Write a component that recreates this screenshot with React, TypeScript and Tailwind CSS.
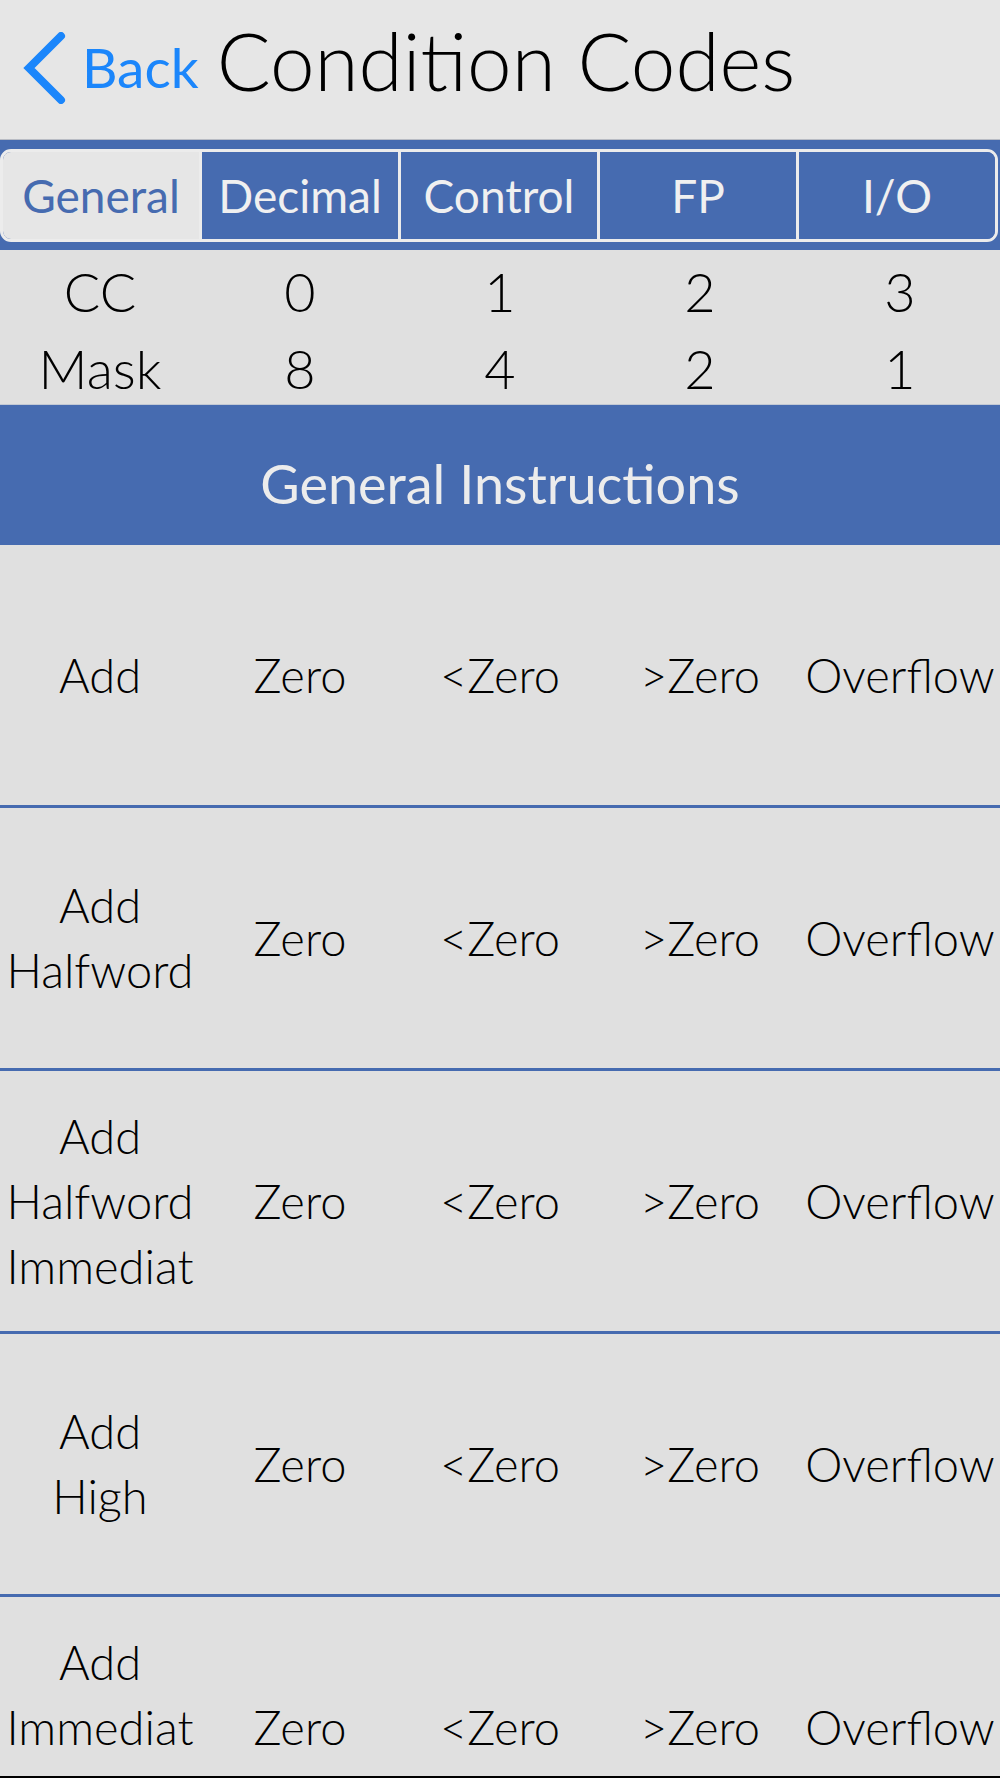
import React, { useState } from "react"

const tabs = ["General", "Decimal", "Control", "FP", "I/O"]

const rows: string[][] = [
  ["Add"],
  ["Add", "Halfword"],
  ["Add", "Halfword", "Immediat"],
  ["Add", "High"],
  ["Add", "Immediat", "\u00a0"],
]

const outcomes = ["Zero", "<Zero", ">Zero", "Overflow"]

function BackChevron() {
  return (
    <svg width="46" height="72" viewBox="0 0 46 72" className="shrink-0">
      <path d="M39 4 L7 36 L39 68" fill="none" stroke="#1b86fb" strokeWidth="8" strokeLinecap="round" strokeLinejoin="miter" />
    </svg>
  )
}

export default function App() {
  const [active, setActive] = useState(0)

  return (
    <div
      className="w-[1000px] h-[1778px] overflow-hidden bg-[#e0e0e0] border-b-2 border-black"
      style={{ fontFamily: "Lato, 'Open Sans', sans-serif" }}
    >
      {/* nav bar */}
      <div className="h-[140px] bg-[#e6e6e6] border-b border-[#b9bcc4] flex items-center pl-[22px] pb-[4px]">
        <button className="flex items-center gap-[14px] text-[#1b86fb]">
          <BackChevron />
          <span className="text-[55px] leading-none">Back</span>
        </button>
        <h1 className="ml-[18px] mb-[16px] text-[80px] leading-none font-light text-black">
          Condition Codes
        </h1>
      </div>

      {/* segmented control */}
      <div className="bg-[#466bb0] h-[110px] pt-[9px] pr-[2px]">
        <div className="flex h-[93px] rounded-[11px] border-[3px] border-[#ececec] overflow-hidden">
          {tabs.map((t, i) => (
            <button
              key={t}
              onClick={() => setActive(i)}
              className={
                "flex-1 flex items-center justify-center text-[46px] " +
                (i > 0 ? "border-l-[3px] border-[#ececec] " : "") +
                (i === active ? "bg-[#e6e6e6] text-[#466bb0]" : "bg-[#466bb0] text-[#f0f0f0]")
              }
            >
              {t}
            </button>
          ))}
        </div>
      </div>

      {/* CC / Mask */}
      <div className="bg-[#e0e0e0] pt-px h-[155px] border-b border-[#c3c9d4]">
        {[
          ["CC", "0", "1", "2", "3"],
          ["Mask", "8", "4", "2", "1"],
        ].map((r) => (
          <div key={r[0]} className="grid grid-cols-5 h-[77px] items-center text-center text-[54px] font-light text-black">
            {r.map((c, i) => (
              <div key={i}>{c}</div>
            ))}
          </div>
        ))}
      </div>

      {/* section header */}
      <div className="h-[140px] bg-[#466bb0] flex items-center justify-center pt-[16px] text-[54px] text-[#ececec]">
        General Instructions
      </div>

      {/* instruction rows */}
      {rows.map((label, idx) => (
        <div key={idx}>
          <div className="h-[260px] grid grid-cols-5 items-center text-center text-[47px] font-light text-black">
            <div className="flex flex-col items-center leading-[65px]">
              {label.map((l, j) => (
                <span key={j}>{l}</span>
              ))}
            </div>
            {outcomes.map((o) => (
              <div key={o}>{o}</div>
            ))}
          </div>
          <div className="h-[3px] bg-[#466bb0]" />
        </div>
      ))}
    </div>
  )
}
